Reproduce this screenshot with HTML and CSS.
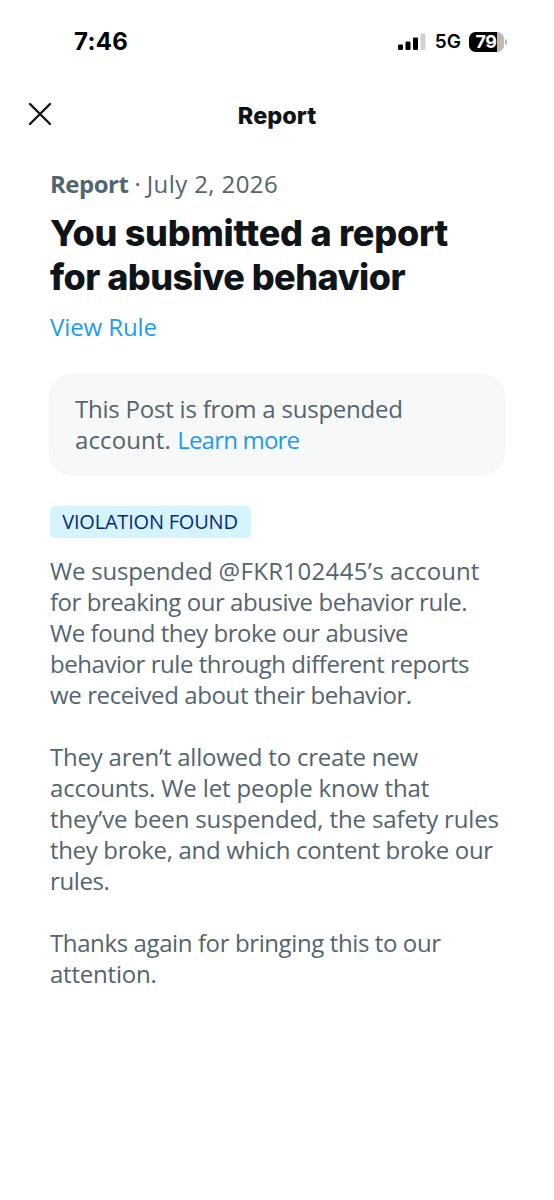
FILE: index.html
```html
<!DOCTYPE html>
<html lang="en">
<head>
<meta charset="utf-8">
<title>Report</title>
<link rel="stylesheet" href="styles.css">
</head>
<body>
<div class="status">
  <span class="time">7:46</span>
  <div class="indicators">
    <svg class="signal" width="28" height="18" viewBox="0 0 28 18">
      <rect x="0" y="11.5" width="5" height="5.5" rx="1.2"/>
      <rect x="7.5" y="8.5" width="5" height="8.5" rx="1.2"/>
      <rect x="15" y="4.5" width="5" height="12.5" rx="1.2"/>
      <rect x="22.5" y="0.5" width="5" height="16.5" rx="1.2" fill="#d2d2d2"/>
    </svg>
    <span class="network">5G</span>
    <div class="battery"><span class="level">79</span></div>
    <i class="cap"></i>
  </div>
</div>
<header class="nav">
  <svg class="close" width="24" height="24" viewBox="0 0 24 24"><path d="M2 2 22 22M22 2 2 22"/></svg>
  <h2 class="title">Report</h2>
</header>
<main class="content">
  <p class="meta"><b>Report</b><span class="dot">·</span><span class="date">July 2, 2026</span></p>
  <h1 class="heading"><span class="line h-first">You submitted a report</span><span class="line h-second">for abusive behavior</span></h1>
  <a class="link rule">View Rule</a>
  <div class="notice"><span class="line t2">This Post is from a suspended</span><span class="line t0">account. <a class="link more">Learn more</a></span></div>
  <div class="badge">VIOLATION FOUND</div>
  <p class="para"><span class="line t2">We suspended <span class="handle">@FKR102445’s</span> <span class="t0">account</span></span><span class="line t5">for breaking our abusive behavior rule.</span><span class="line t5">We found they broke our abusive</span><span class="line t5">behavior rule through different reports</span><span class="line t4">we received about their behavior.</span></p>
  <p class="para"><span class="line t2">They aren’t allowed to create new</span><span class="line t1">accounts. We let people know that</span><span class="line t1">they’ve been suspended, the safety rules</span><span class="line t3">they broke, and which content broke our</span><span class="line t4">rules.</span></p>
  <p class="para"><span class="line t4">Thanks again for bringing this to our</span><span class="line t2">attention.</span></p>
</main>
</body>
</html>
```
FILE: styles.css
```css
* { box-sizing: border-box; }
body { margin: 0; width: 554px; min-height: 1200px; background: #fff; color: #0f1419; font-family: "Open Sans", sans-serif; font-size: 24px; line-height: 31px; }
h1, h2, p { margin: 0; }
.status { height: 84px; padding: 26px 46px 0 74px; display: flex; justify-content: space-between; align-items: flex-start; color: #000; font-family: Inter, sans-serif; }
.time { font-size: 24px; font-weight: 700; letter-spacing: 0.3px; }
.indicators { display: flex; align-items: center; height: 31px; }
.network { margin-left: 9px; font-size: 19px; font-weight: 600; }
.battery { width: 35px; height: 20px; margin-left: 8px; padding-right: 1px; border-radius: 6.5px; background: linear-gradient(90deg, #000 80%, #b9b9b9 80%); color: #fff; display: flex; align-items: center; justify-content: center; }
.level { font-size: 18px; font-weight: 700; line-height: 20px; letter-spacing: -0.5px; }
.cap { width: 2px; height: 6px; margin: 0 1px; border-radius: 0 2px 2px 0; background: #b9b9b9; }
.nav { height: 60px; display: grid; grid-template-columns: 80px 1fr 80px; align-items: center; }
.close { margin-left: 28px; fill: none; stroke: #0f1419; stroke-width: 2.4; stroke-linecap: round; }
.title { padding-top: 2px; text-align: center; font-family: Inter, sans-serif; font-size: 23.5px; font-weight: 800; letter-spacing: 0; }
.content { padding: 24px 50px 0; color: #536471; }
.line { display: block; width: max-content; white-space: nowrap; }
.meta { height: 31px; }
.meta b { letter-spacing: -0.5px; }
.dot { margin: 0 6px; }
.date { letter-spacing: 0.4px; }
.heading { margin-top: 12px; font-family: Inter, sans-serif; font-size: 36px; font-weight: 800; line-height: 44px; color: #0f1419; }
.h-first { letter-spacing: -0.25px; }
.h-second { letter-spacing: -0.55px; }
.link { color: #1d9bf0; }
.rule { display: block; margin-top: 12px; letter-spacing: -0.1px; }
.notice { margin: 32px -1px 0; height: 101px; padding: 18px 25px; border: 1px solid #eff3f4; border-radius: 24px; background: #f7f9f9; }
.more { letter-spacing: -0.8px; }
.badge { width: 201px; height: 32px; margin: 31px 0 0 -0.5px; border-radius: 5px; background: #d6f4ff; color: #002b7d; font-size: 20px; letter-spacing: -0.2px; text-align: center; }
.para { margin-top: 31px; }
.badge + .para { margin-top: 17px; }
.handle { letter-spacing: 0.35px; }
.t0 { letter-spacing: 0.1px; }
.t1 { letter-spacing: -0.14px; }
.t2 { letter-spacing: -0.22px; }
.t3 { letter-spacing: -0.33px; }
.t4 { letter-spacing: -0.39px; }
.t5 { letter-spacing: -0.45px; }
```
